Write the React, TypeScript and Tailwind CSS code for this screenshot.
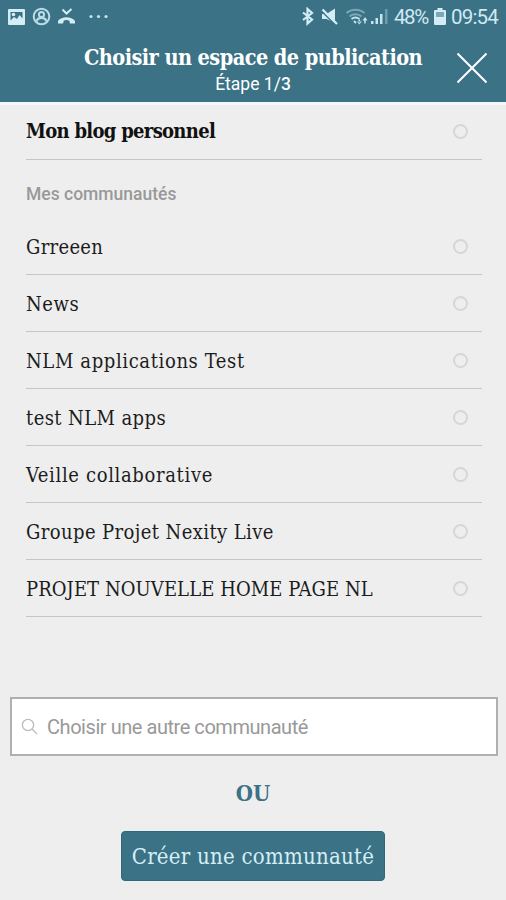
import clsx from 'clsx'

const slab = "font-['DejaVu_Serif_Condensed','DejaVu_Serif',serif] [font-stretch:condensed]"

const communities = [
  { name: 'Grreeen', tracking: 'tracking-[0.3px]' },
  { name: 'News', tracking: 'tracking-[0.6px]' },
  { name: 'NLM applications Test', tracking: 'tracking-[0.62px]' },
  { name: 'test NLM apps', tracking: 'tracking-[0.4px]' },
  { name: 'Veille collaborative', tracking: 'tracking-[0.65px]' },
  { name: 'Groupe Projet Nexity Live', tracking: 'tracking-[0.4px]' },
  { name: 'PROJET NOUVELLE HOME PAGE NL', tracking: 'tracking-[0.07px]' },
]

function StatusIcons() {
  return (
    <svg width="110" height="20" viewBox="0 0 110 20" fill="none" className="shrink-0">
      {/* picture */}
      <path d="M2 2h15q1 0 1 1v14q0 1-1 1H2q-1 0-1-1V3q0-1 1-1z" fill="#d3edf5" />
      <path d="M3.500 5h12v6.500l-3-3.500-2.500 4-3-2-3.500 3.500z" fill="#3b7285" />
      <circle cx="6.500" cy="7.500" r="1.800" fill="#d3edf5" />
      {/* account */}
      <circle cx="34.500" cy="9.500" r="7.800" stroke="#b9dce8" strokeWidth="2" />
      <circle cx="34.500" cy="7.500" r="2.600" stroke="#b9dce8" strokeWidth="2" />
      <path d="M29.800 14.500c.4-4.800 9-4.800 9.400 0" stroke="#b9dce8" strokeWidth="2.200" />
      {/* missed call */}
      <path d="M55.500 2.500l4 4L64.500 2" stroke="#d3edf5" strokeWidth="2" />
      <path d="M51 16.500v-2.500c3.500-5 13.500-5 17 0v2.500h-5l-.8-3c-1.800-.7-3.600-.7-5.400 0l-.8 3z" fill="#d3edf5" />
      <g fill="#c5e4ee">
        <circle cx="84" cy="9.500" r="1.600" />
        <circle cx="91.500" cy="9.500" r="1.600" />
        <circle cx="99" cy="9.500" r="1.600" />
      </g>
    </svg>
  )
}

function SignalIcons() {
  return (
    <svg width="88" height="20" viewBox="0 0 88 20" fill="none" className="shrink-0">
      {/* bluetooth */}
      <path d="M2 5.500l9 7-4.500 4V2L11 6l-9 7" stroke="#d3edf5" strokeWidth="2.200" />
      {/* muted speaker */}
      <path d="M21 7h4.500L34 1.500v14.500l-8.500-4H21z" fill="#d3edf5" />
      <path d="M20.500 4L35 18.500" stroke="#3b7285" strokeWidth="1.500" />
      <path d="M21.500 2.500L36 17" stroke="#d3edf5" strokeWidth="2.300" />
      {/* wifi */}
      <path d="M45.500 6c5-4.500 13-4.500 18 0M48.500 9.500c3.500-3 9-3 12 0" stroke="#7ba7b6" strokeWidth="2" />
      <path d="M50.500 12c2.500-2 5.500-2 8 0M53 14l2 2" stroke="#c5e4ee" strokeWidth="1.900" />
      <path d="M56 14.500l2.300 3 2.500-3zM57.600 12.500h1.500v3h-1.500zM61.500 13.500L64 10l2.500 3.500zM63.200 12.500h1.500v4h-1.500z" fill="#c5e4ee" />
      {/* signal bars */}
      <path d="M70 17v-3h2.500v3zM74.500 17v-6H77v6zM79 17V7h2.500v10z" fill="#c5e4ee" />
      <path d="M84 17V2h2.500v15z" fill="#6d9caf" />
    </svg>
  )
}

function BatteryIcon() {
  return (
    <svg width="12" height="18" viewBox="0 0 12 18" className="shrink-0">
      <path d="M3.500 0h5v2H11q1 0 1 1v13q0 1-1 1H1q-1 0-1-1V3q0-1 1-1h2.500z" fill="#d3edf5" />
      <path d="M2 4h8v5H2z" fill="#7ba7b6" />
    </svg>
  )
}

interface RowProps {
  label: string
  className?: string
}

function Row({ label, className }: RowProps) {
  return (
    <div className="mx-[26px] flex h-[57px] w-[456px] items-center justify-between border-b-[1.5px] border-[#c6c6c6] pr-[14px]">
      <span className={clsx(slab, 'whitespace-nowrap', className)}>{label}</span>
      <span className="h-[15px] w-[15px] shrink-0 rounded-full border-2 border-[#d6d6d6]" />
    </div>
  )
}

export default function App() {
  return (
    <div className="flex h-[900px] w-[506px] flex-col overflow-hidden bg-[#eee] font-[Roboto,sans-serif]">
      <header className="h-[102px] bg-[#3b7285]">
        <div className="flex h-[34px] items-center justify-between pl-[7px] pr-[7px]">
          <StatusIcons />
          <div className="flex items-center text-[#cfe9f2]">
            <SignalIcons />
            <span className="ml-[5px] w-[35px] whitespace-nowrap text-[20.500px] leading-[20px] tracking-[-1.4px]">48%</span>
            <span className="ml-[5px]"><BatteryIcon /></span>
            <span className="ml-[5px] w-[48px] whitespace-nowrap text-[20.500px] leading-[20px] tracking-[-0.8px]">09:54</span>
          </div>
        </div>
        <div className="flex h-[68px]">
          <div className="ml-[70px] flex w-[366px] flex-col items-center text-white">
            <h1 className={clsx(slab, 'mt-[10px] whitespace-nowrap text-[21.500px] leading-[28px] font-bold tracking-[-0.55px]')}>
              Choisir un espace de publication
            </h1>
            <p className="mt-[2px] text-[17.500px] leading-[20px]">
              Étape 1/<span className="font-medium">3</span>
            </p>
          </div>
          <svg width="32" height="32" viewBox="0 0 32 32" className="ml-[20px] mt-[18px]" stroke="#fff" strokeWidth="2">
            <path d="M1.500 1.500l29 29M30.500 1.500l-29 29" />
          </svg>
        </div>
      </header>

      <div className="h-[3px] bg-[#f5f5fc]" />
      <div className="-mt-[2px]">
        <Row label="Mon blog personnel" className="text-[20px] font-bold tracking-[-0.7px] text-[#111]" />
      </div>
      <h2 className="ml-[26px] mt-[23px] text-[17.500px] leading-[22px] font-medium text-[#999]">Mes communautés</h2>

      <div className="mt-[13px]">
        {communities.map((c) => (
          <Row key={c.name} label={c.name} className={clsx('mt-[2px] text-[20px] text-[#1c1c1c]', c.tracking)} />
        ))}
      </div>

      <div className="ml-[10px] mt-[80px] flex h-[59px] w-[488px] items-center border-2 border-[#b0b0b0] bg-white pl-[9px]">
        <svg width="17" height="17" viewBox="0 0 17 17" fill="none" stroke="#bbb" strokeWidth="1.300">
          <circle cx="7" cy="7" r="5.600" />
          <path d="M11 11l5 5" />
        </svg>
        <span className="ml-[9px] text-[20px] leading-[24px] tracking-[-0.45px] text-[#999]">Choisir une autre communauté</span>
      </div>

      <p className={clsx(slab, 'mt-[22px] text-center text-[22px] leading-[30px] font-bold text-[#3b7285]')}>OU</p>

      <button className={clsx(slab, 'mx-auto mt-[23px] h-[50px] w-[264px] whitespace-nowrap rounded-[4px] border border-[#2f687b] bg-[#3b7285] text-[22px] tracking-[0.25px] text-[#d6eef6]')}>
        Créer une communauté
      </button>
    </div>
  )
}
